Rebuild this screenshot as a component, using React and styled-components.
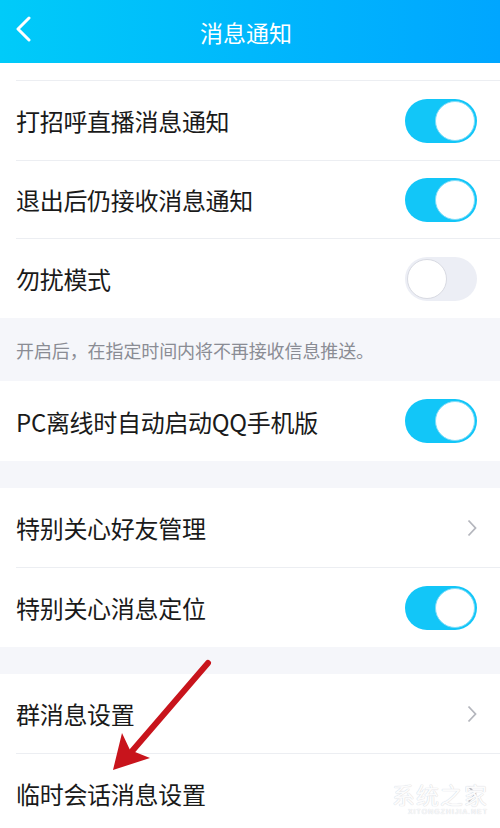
import React from 'react';
import styled, { createGlobalStyle } from 'styled-components';

const Global = createGlobalStyle`
  body {
    margin: 0;
    background: #f5f6fa;
    font-family: "Noto Sans CJK SC", "Noto Sans", sans-serif;
  }
`;

const Page = styled.div`
  position: relative;
  width: 500px;
  height: 828px;
  overflow: hidden;
  background: #f5f6fa;
`;

const Header = styled.div`
  height: 63px;
  display: flex;
  align-items: center;
  justify-content: center;
  padding-right: 8px;
  position: relative;
  background: linear-gradient(90deg, #00cbf9 0%, #00b8fc 50%, #00a6ff 100%);
  color: #fff;
  font-size: 23px;
`;

const Back = styled.div`
  position: absolute;
  left: 14px;
  top: 16px;
  width: 20px;
  height: 26px;
  display: flex;
`;

const Group = styled.div`
  background: #fff;
  margin-top: ${p => p.$gap || 0}px;
`;

const Stub = styled.div`
  height: 17px;
`;

const Row = styled.div`
  height: ${p => p.$h || 79}px;
  display: flex;
  align-items: center;
  justify-content: space-between;
  padding: 0 23px 0 16px;
  box-sizing: border-box;
  border-top: ${p => (p.$line ? '1px solid #eceef2' : 'none')};
  margin-left: ${p => (p.$line ? 16 : 0)}px;
  padding-left: ${p => (p.$line ? 0 : 16)}px;
`;

const Label = styled.span`
  font-size: 24px;
  color: #1a1a1a;
  letter-spacing: -0.3px;
`;

const Track = styled.div`
  width: 72px;
  height: 44px;
  border-radius: 22px;
  box-sizing: border-box;
  background: ${p => (p.$on ? '#12c6f8' : '#eceef5')};
  position: relative;
`;

const Knob = styled.div`
  position: absolute;
  top: 2px;
  left: ${p => (p.$on ? 30 : 2)}px;
  width: 40px;
  height: 40px;
  border-radius: 50%;
  background: #fff;
  box-sizing: border-box;
  border: 1.5px solid ${p => (p.$on ? '#7fdcf8' : '#d8dae2')};
`;

const Note = styled.div`
  height: 63px;
  padding: 0 16px;
  display: flex;
  align-items: center;
  font-size: 18px;
  letter-spacing: -0.1px;
  color: #8a8c94;
`;

const Overlay = styled.svg`
  position: absolute;
  left: 0;
  top: 0;
  pointer-events: none;
`;

const Watermark = styled.div`
  position: absolute;
  right: 12px;
  bottom: 12px;
  display: flex;
  flex-direction: column;
  align-items: flex-end;
  gap: 2px;
  color: rgba(255, 255, 255, 0.95);
  text-shadow: 0 0 1px #d6d8de, 0 0 1px #d6d8de;
`;

const MarkName = styled.span`
  font-size: 23px;
  letter-spacing: 1px;
  line-height: 24px;
`;

const MarkSite = styled.span`
  font-size: 7px;
  line-height: 8px;
  letter-spacing: 1px;
  font-family: "Liberation Sans", sans-serif;
`;

function Toggle({ on }) {
  return (
    <Track $on={on}>
      <Knob $on={on} />
    </Track>
  );
}

function Chevron() {
  return (
    <svg width="10" height="18" viewBox="0 0 10 18">
      <path d="M1.5 1.5 L8.5 9 L1.5 16.5" fill="none" stroke="#b4b6bd" strokeWidth="1.8" />
    </svg>
  );
}

export default function App() {
  return (
    <Page>
      <Global />
      <Header>
        <Back>
          <svg width="20" height="26" viewBox="0 0 20 26">
            <path d="M15 2 L4 13 L15 24" fill="none" stroke="#fff" strokeWidth="3" strokeLinecap="round" strokeLinejoin="round" />
          </svg>
        </Back>
        消息通知
      </Header>

      <Group>
        <Stub />
        <Row $line $h={80}>
          <Label>打招呼直播消息通知</Label>
          <Toggle on />
        </Row>
        <Row $line $h={78}>
          <Label>退出后仍接收消息通知</Label>
          <Toggle on />
        </Row>
        <Row $line $h={80}>
          <Label>勿扰模式</Label>
          <Toggle />
        </Row>
      </Group>
      <Note>开启后，在指定时间内将不再接收信息推送。</Note>

      <Group>
        <Row $h={80}>
          <Label>PC离线时自动启动QQ手机版</Label>
          <Toggle on />
        </Row>
      </Group>

      <Group $gap={27}>
        <Row $h={79}>
          <Label>特别关心好友管理</Label>
          <Chevron />
        </Row>
        <Row $line $h={80}>
          <Label>特别关心消息定位</Label>
          <Toggle on />
        </Row>
      </Group>

      <Group $gap={27}>
        <Row $h={79}>
          <Label>群消息设置</Label>
          <Chevron />
        </Row>
        <Row $line $h={80}>
          <Label>临时会话消息设置</Label>
          <Chevron />
        </Row>
      </Group>

      <Overlay width="500" height="828" viewBox="0 0 500 828">
        <path d="M208 663 L127 757" stroke="#c8141c" strokeWidth="6" strokeLinecap="round" />
        <path d="M113 770 L122 733 L130 750 L150 758 Z" fill="#c8141c" />
      </Overlay>
      <Watermark>
        <MarkName>系统之家</MarkName>
        <MarkSite>XITONGZHIJIA.NET</MarkSite>
      </Watermark>
    </Page>
  );
}
